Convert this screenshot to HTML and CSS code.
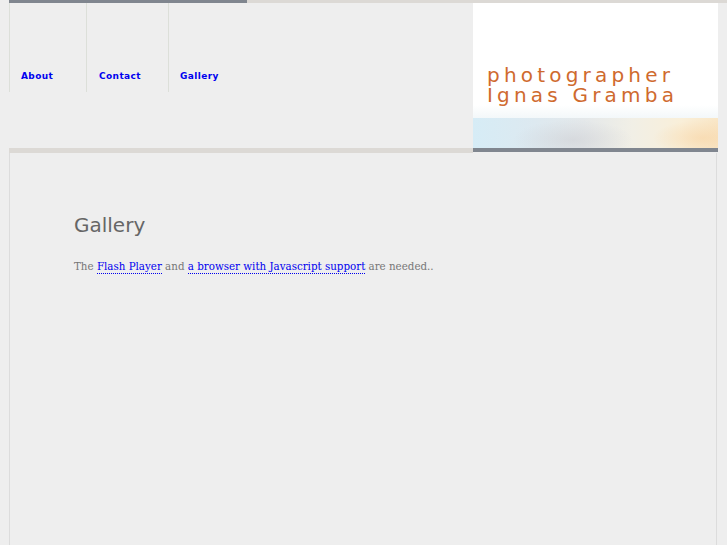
FILE: index.html
```html
<!DOCTYPE html>
<html lang="en">
<head>
    <meta charset="UTF-8">
    <title>Ignas Gramba - Gallery</title>
    <link rel="stylesheet" href="styles.css">
</head>
<body>
<div id="page">
    <div id="header">
        <div id="masthead">
            <ul id="nav">
                <li class="navItem about"><a href="#">About</a></li>
                <li class="navItem contact"><a href="#">Contact</a></li>
                <li class="navItem gallery"><a href="#">Gallery</a></li>
            </ul>
        </div>
        <div id="logo">
            <div id="logoText">photographer<br>Ignas Gramba</div>
            <div id="haze"></div>
            <div id="wash"></div>
        </div>
    </div>

    <div id="content">
        <h2>Gallery</h2>
        <p>The <a href="#">Flash Player</a> and <a href="#">a browser with Javascript support</a> are needed..</p>
    </div>
</div>
</body>
</html>
```

FILE: styles.css
```css
html, body {
    height: 100%;
}
body {
    margin: 0;
    background-color: #eeeeee;
    font-family: "DejaVu Sans", sans-serif;
    overflow: hidden;
}
#page {
    margin-left: 9px;
    display: flex;
    flex-direction: column;
    height: 100%;
}
#header {
    display: flex;
    border-top: 3px solid #dcd9d5;
}
#masthead {
    width: 464px;
    height: 145px;
    border-bottom: 5px solid #dcd9d5;
}
#nav {
    list-style: none;
    margin: -3px 0 0 0;
    padding: 0;
    display: flex;
    width: 238px;
    border-top: 3px solid #80868f;
}
.navItem {
    height: 89px;
    border-left: 1px solid #dcdfd9;
    display: flex;
    align-items: flex-end;
    padding: 0 0 11px 11px;
    box-sizing: border-box;
}
.about { width: 77px; }
.contact { width: 82px; padding-left: 12px; }
.gallery { width: 79px; }
.navItem a {
    color: #0000ee;
    text-decoration: none;
    font-weight: bold;
    font-size: 9px;
    letter-spacing: 0.4px;
}
#logo {
    width: 245px;
    height: 145px;
    background-color: #ffffff;
    border-bottom: 4px solid #80868f;
    display: flex;
    flex-direction: column;
}
#logoText {
    padding: 62px 0 0 14px;
    color: #cf6a2e;
    font-size: 20px;
    line-height: 20px;
    letter-spacing: 4.2px;
}
#haze {
    margin-top: auto;
    height: 14px;
    background: linear-gradient(180deg, rgba(255,255,255,0) 0%, rgba(240,246,248,0.8) 100%);
}
#wash {
    height: 31px;
    background:
        radial-gradient(ellipse 60px 20px at 100px 22px, rgba(200,200,205,0.45), rgba(200,200,205,0)),
        radial-gradient(ellipse 50px 18px at 230px 20px, rgba(248,215,170,0.7), rgba(248,215,170,0)),
        linear-gradient(90deg, #d6ecf6 0%, #dde9f0 25%, #e4e8ea 45%, #f1efe6 65%, #f9efd9 85%, #f9e6c6 100%);
}
#content {
    flex: 1;
    width: 708px;
    border-left: 1px solid #dcdcdc;
    border-right: 1px solid #dcdcdc;
    padding: 60px 64px 0 64px;
    box-sizing: border-box;
}
#content h2 {
    margin: 0;
    font-weight: normal;
    font-size: 20px;
    color: #666666;
}
#content p {
    margin: 23px 0 0 0;
    font-family: "DejaVu Serif", serif;
    font-size: 10.3px;
    color: #777777;
}
#content p a {
    color: #0000ee;
    text-decoration: none;
    padding-bottom: 1px;
    border-bottom: 1px dotted #0000ee;
}
```
